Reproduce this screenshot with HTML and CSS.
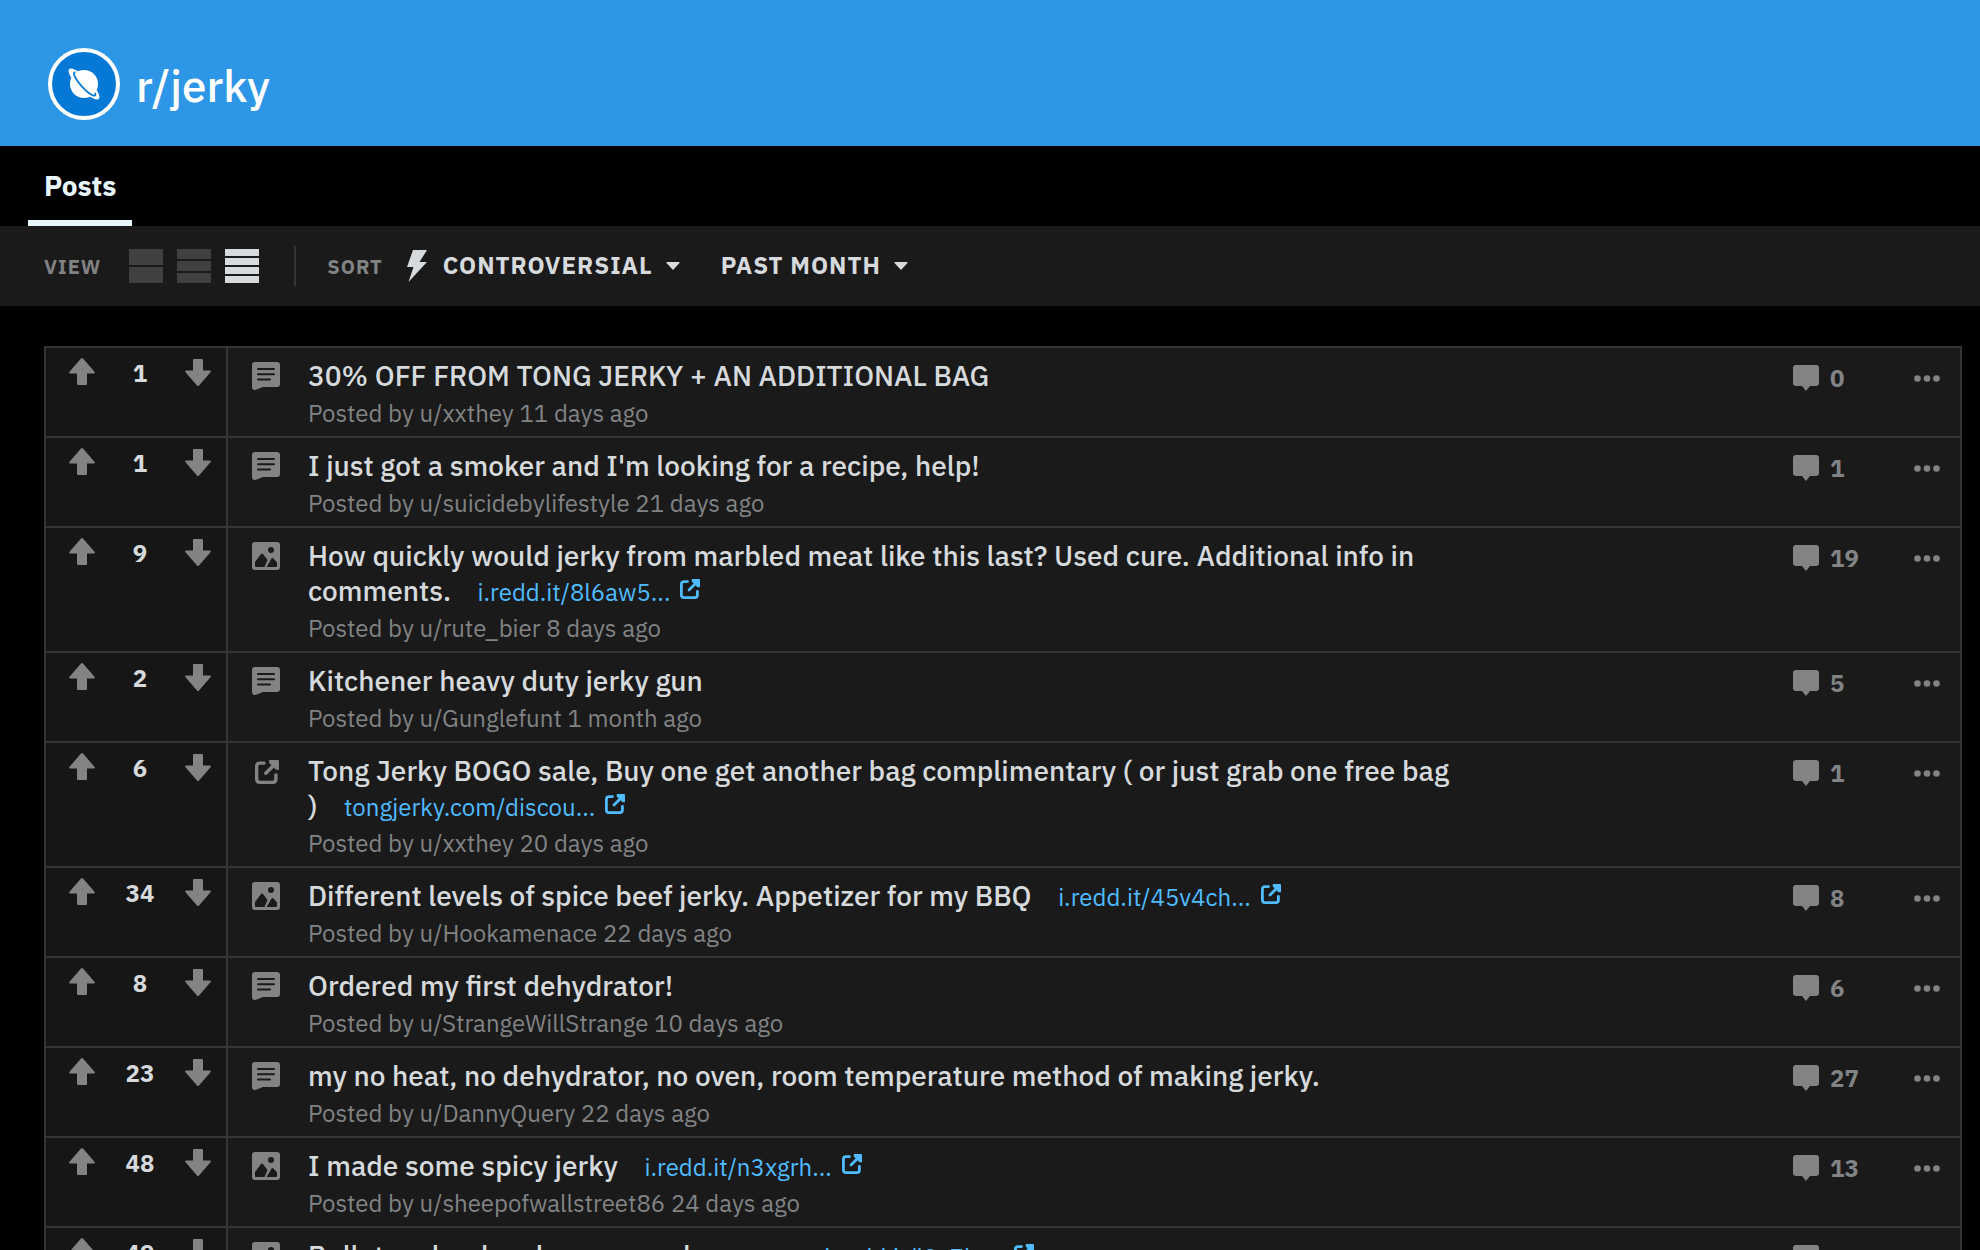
FILE: index.html
```
<!DOCTYPE html>
<html lang="en">
<head>
    <meta charset="UTF-8">
    <meta name="viewport" content="width=device-width, initial-scale=1.0">
    <title>r/jerky</title>
    <link rel="stylesheet" href="styles.css">
</head>
<body>
    <!-- Shared icons -->
    <svg class="sprite" aria-hidden="true">
        <symbol id="arrow" viewBox="0 0 26 27">
            <path d="M12 .6Q13-.4 14 .6L25.700 14Q26.200 15.500 25 15.500H18V26Q18 27 17 27H9Q8 27 8 26V15.500H1Q-.2 15.500.3 14Z"/>
        </symbol>
        <symbol id="text" viewBox="0 0 28 28">
            <path fill-rule="evenodd" d="M3 0H25Q28 0 28 3V22Q28 25 25 25H11L4 27.800Q0 28.500 0 25V3Q0 0 3 0ZM6 6Q5 6 5 7T6 8H22Q23 8 23 7T22 6ZM6 11.200Q5 11.200 5 12.200T6 13.200H22Q23 13.200 23 12.200T22 11.200ZM6 16.400Q5 16.400 5 17.400T6 18.400H18Q19 18.400 19 17.400T18 16.400Z"/>
        </symbol>
        <symbol id="image" viewBox="0 0 28 28">
            <path fill-rule="evenodd" d="M3 0H25Q28 0 28 3V25Q28 28 25 28H3Q0 28 0 25V3Q0 0 3 0ZM19 5A3 3 0 1 0 19 11A3 3 0 1 0 19 5ZM9 12Q10 11 11 12L15.500 18L12.500 25H4Q3 25 3 24V20ZM14.500 25L17 21L19.500 16.500Q20.500 15.500 21.500 16.500L25 20.500V24Q25 25 24 25Z"/>
        </symbol>
        <symbol id="external" viewBox="0 0 20 20">
            <path fill="none" stroke="currentColor" stroke-width="2.800" stroke-linecap="round" d="M7.500 2.600H4Q1.400 2.600 1.400 5.200V16Q1.400 18.600 4 18.600H14.800Q17.400 18.600 17.400 16V12.500M9 11L16.500 3.500"/>
            <path d="M11.800 0H19Q20 0 20 1V8.200H17.500L11.800 2.500Z"/>
        </symbol>
        <symbol id="comment" viewBox="0 0 26 26">
            <path d="M3 0H23Q26 0 26 3V18Q26 21 23 21H17L13 26L9 21H3Q0 21 0 18V3Q0 0 3 0Z"/>
        </symbol>
        <symbol id="dots" viewBox="0 0 26 26">
            <circle cx="3.500" cy="13.500" r="3.300"/><circle cx="13" cy="13.500" r="3.300"/><circle cx="22.500" cy="13.500" r="3.300"/>
        </symbol>
        <symbol id="caret" viewBox="0 0 14 8">
            <path d="M1 0H13Q14 .3 13.500 1L7.500 7.500Q7 8 6.500 7.500L.5 1Q0 .3 1 0Z"/>
        </symbol>
    </svg>

    <header class="header">
        <div class="avatar">
            <svg width="32" height="32" viewBox="0 0 32 32">
                <circle cx="16" cy="16" r="14" fill="#fff"/>
                <ellipse cx="16" cy="16" rx="21" ry="6" fill="#fff" transform="rotate(45 16 16)"/>
                <path d="M7.500 4.500C5 4.200 5 6.500 9.500 13S21 26 25 27.500C27.300 28.200 27.800 26.800 27.200 24.800" fill="none" stroke="#0679d6" stroke-width="1.800"/>
            </svg>
        </div>
        <h1>r/jerky</h1>
    </header>

    <nav class="tabs">
        <a href="#posts" class="tab">Posts</a>
    </nav>

    <div class="toolbar">
        <span class="toolbar-label">View</span>
        <div class="views">
            <button class="view" aria-label="Card view">
                <svg width="34" height="34"><path d="M0 0h34v16H0zM0 18h34v16H0z"/></svg>
            </button>
            <button class="view" aria-label="Classic view">
                <svg width="34" height="34"><path d="M0 0h34v10H0zM0 12h34v10H0zM0 24h34v10H0z"/></svg>
            </button>
            <button class="view active" aria-label="Compact view">
                <svg width="34" height="34"><path d="M0 0h34v7H0zM0 9h34v7H0zM0 18h34v7H0zM0 27h34v7H0z"/></svg>
            </button>
        </div>
        <div class="divider"></div>
        <label class="toolbar-label" for="sort">Sort</label>
        <div class="dropdown">
            <svg class="bolt" width="20" height="32" viewBox="0 0 20 32"><path d="M6 0H20L12.500 12H20L1.500 32L6.500 17H0Z"/></svg>
            <select id="sort"><option>CONTROVERSIAL</option></select>
            <svg width="14" height="8"><use href="#caret"/></svg>
        </div>
        <div class="dropdown">
            <select aria-label="Time range"><option>PAST MONTH</option></select>
            <svg width="14" height="8"><use href="#caret"/></svg>
        </div>
    </div>

    <main class="posts" id="posts">
        <article class="post">
            <div class="votes">
                <button aria-label="Upvote"><svg><use href="#arrow"/></svg></button>
                <span class="score">1</span>
                <button class="down" aria-label="Downvote"><svg><use href="#arrow"/></svg></button>
            </div>
            <svg class="type"><use href="#text"/></svg>
            <div class="info">
                <h2>30% OFF FROM TONG JERKY + AN ADDITIONAL BAG</h2>
                <p>Posted by u/xxthey 11 days ago</p>
            </div>
            <button class="comments"><svg><use href="#comment"/></svg>0</button>
            <button class="more" aria-label="More options"><svg><use href="#dots"/></svg></button>
        </article>

        <article class="post">
            <div class="votes">
                <button aria-label="Upvote"><svg><use href="#arrow"/></svg></button>
                <span class="score">1</span>
                <button class="down" aria-label="Downvote"><svg><use href="#arrow"/></svg></button>
            </div>
            <svg class="type"><use href="#text"/></svg>
            <div class="info">
                <h2>I just got a smoker and I'm looking for a recipe, help!</h2>
                <p>Posted by u/suicidebylifestyle 21 days ago</p>
            </div>
            <button class="comments"><svg><use href="#comment"/></svg>1</button>
            <button class="more" aria-label="More options"><svg><use href="#dots"/></svg></button>
        </article>

        <article class="post">
            <div class="votes">
                <button aria-label="Upvote"><svg><use href="#arrow"/></svg></button>
                <span class="score">9</span>
                <button class="down" aria-label="Downvote"><svg><use href="#arrow"/></svg></button>
            </div>
            <svg class="type"><use href="#image"/></svg>
            <div class="info">
                <h2>How quickly would jerky from marbled meat like this last? Used cure. Additional info in comments. <a href="#">i.redd.it/8l6aw5...<svg><use href="#external"/></svg></a></h2>
                <p>Posted by u/rute_bier 8 days ago</p>
            </div>
            <button class="comments"><svg><use href="#comment"/></svg>19</button>
            <button class="more" aria-label="More options"><svg><use href="#dots"/></svg></button>
        </article>

        <article class="post">
            <div class="votes">
                <button aria-label="Upvote"><svg><use href="#arrow"/></svg></button>
                <span class="score">2</span>
                <button class="down" aria-label="Downvote"><svg><use href="#arrow"/></svg></button>
            </div>
            <svg class="type"><use href="#text"/></svg>
            <div class="info">
                <h2>Kitchener heavy duty jerky gun</h2>
                <p>Posted by u/Gunglefunt 1 month ago</p>
            </div>
            <button class="comments"><svg><use href="#comment"/></svg>5</button>
            <button class="more" aria-label="More options"><svg><use href="#dots"/></svg></button>
        </article>

        <article class="post">
            <div class="votes">
                <button aria-label="Upvote"><svg><use href="#arrow"/></svg></button>
                <span class="score">6</span>
                <button class="down" aria-label="Downvote"><svg><use href="#arrow"/></svg></button>
            </div>
            <svg class="type"><use href="#external" x="3" y="3" width="24" height="24"/></svg>
            <div class="info">
                <h2>Tong Jerky BOGO sale, Buy one get another bag complimentary ( or just grab one free bag ) <a href="#">tongjerky.com/discou...<svg><use href="#external"/></svg></a></h2>
                <p>Posted by u/xxthey 20 days ago</p>
            </div>
            <button class="comments"><svg><use href="#comment"/></svg>1</button>
            <button class="more" aria-label="More options"><svg><use href="#dots"/></svg></button>
        </article>

        <article class="post">
            <div class="votes">
                <button aria-label="Upvote"><svg><use href="#arrow"/></svg></button>
                <span class="score">34</span>
                <button class="down" aria-label="Downvote"><svg><use href="#arrow"/></svg></button>
            </div>
            <svg class="type"><use href="#image"/></svg>
            <div class="info">
                <h2>Different levels of spice beef jerky. Appetizer for my BBQ <a href="#">i.redd.it/45v4ch...<svg><use href="#external"/></svg></a></h2>
                <p>Posted by u/Hookamenace 22 days ago</p>
            </div>
            <button class="comments"><svg><use href="#comment"/></svg>8</button>
            <button class="more" aria-label="More options"><svg><use href="#dots"/></svg></button>
        </article>

        <article class="post">
            <div class="votes">
                <button aria-label="Upvote"><svg><use href="#arrow"/></svg></button>
                <span class="score">8</span>
                <button class="down" aria-label="Downvote"><svg><use href="#arrow"/></svg></button>
            </div>
            <svg class="type"><use href="#text"/></svg>
            <div class="info">
                <h2>Ordered my first dehydrator!</h2>
                <p>Posted by u/StrangeWillStrange 10 days ago</p>
            </div>
            <button class="comments"><svg><use href="#comment"/></svg>6</button>
            <button class="more" aria-label="More options"><svg><use href="#dots"/></svg></button>
        </article>

        <article class="post">
            <div class="votes">
                <button aria-label="Upvote"><svg><use href="#arrow"/></svg></button>
                <span class="score">23</span>
                <button class="down" aria-label="Downvote"><svg><use href="#arrow"/></svg></button>
            </div>
            <svg class="type"><use href="#text"/></svg>
            <div class="info">
                <h2>my no heat, no dehydrator, no oven, room temperature method of making jerky.</h2>
                <p>Posted by u/DannyQuery 22 days ago</p>
            </div>
            <button class="comments"><svg><use href="#comment"/></svg>27</button>
            <button class="more" aria-label="More options"><svg><use href="#dots"/></svg></button>
        </article>

        <article class="post">
            <div class="votes">
                <button aria-label="Upvote"><svg><use href="#arrow"/></svg></button>
                <span class="score">48</span>
                <button class="down" aria-label="Downvote"><svg><use href="#arrow"/></svg></button>
            </div>
            <svg class="type"><use href="#image"/></svg>
            <div class="info">
                <h2>I made some spicy jerky <a href="#">i.redd.it/n3xgrh...<svg><use href="#external"/></svg></a></h2>
                <p>Posted by u/sheepofwallstreet86 24 days ago</p>
            </div>
            <button class="comments"><svg><use href="#comment"/></svg>13</button>
            <button class="more" aria-label="More options"><svg><use href="#dots"/></svg></button>
        </article>

        <article class="post">
            <div class="votes">
                <button aria-label="Upvote"><svg><use href="#arrow"/></svg></button>
                <span class="score">49</span>
                <button class="down" aria-label="Downvote"><svg><use href="#arrow"/></svg></button>
            </div>
            <svg class="type"><use href="#image"/></svg>
            <div class="info">
                <h2>Bullet and red and my own rub as ever <a href="#">i.redd.it/l9c7lu...<svg><use href="#external"/></svg></a></h2>
            </div>
            <button class="comments"><svg><use href="#comment"/></svg>8</button>
            <button class="more" aria-label="More options"><svg><use href="#dots"/></svg></button>
        </article>
    </main>
</body>
</html>
```
FILE: styles.css
```
* {
    margin: 0;
    padding: 0;
    box-sizing: border-box;
}

html,
body {
    height: 100%;
}

body {
    font-family: 'IBM Plex Sans', Roboto, sans-serif;
    font-size: 24px;
    background-color: #000;
    color: #d7dadc;
    overflow-x: hidden;
}

button,
select {
    font: inherit;
    color: inherit;
    background: none;
    border: none;
    cursor: pointer;
}

svg {
    display: block;
    fill: currentColor;
}

.sprite {
    width: 0;
    height: 0;
    position: absolute;
}

/* Header */
.header {
    display: flex;
    align-items: center;
    gap: 16px;
    padding: 48px 48px 26px;
    background-color: #2e96e6;
    color: #fff;
}

.header h1 {
    font-size: 44px;
    line-height: 56px;
    font-weight: 500;
    padding-top: 4px;
}

.avatar {
    display: flex;
    align-items: center;
    justify-content: center;
    width: 72px;
    height: 72px;
    border: 4px solid #fff;
    border-radius: 50%;
    background-color: #0679d6;
}

/* Tabs */
.tabs {
    display: flex;
    padding-left: 28px;
}

.tab {
    padding: 6px 16px 0;
    border-bottom: 6px solid #e8f5fd;
    color: #e8f5fd;
    font-size: 28px;
    line-height: 68px;
    font-weight: 700;
    text-decoration: none;
}

/* View and sort bar */
.toolbar {
    display: flex;
    align-items: center;
    height: 80px;
    padding-left: 44px;
    background-color: #1a1a1b;
}

.toolbar-label {
    color: #818384;
    font-size: 20px;
    font-weight: 700;
    letter-spacing: 1px;
    text-transform: uppercase;
}

.views {
    display: flex;
    gap: 14px;
    margin: 0 35px 0 28px;
}

.view {
    color: #3f4042;
}

.view.active {
    color: #d7dadc;
}

.divider {
    width: 2px;
    height: 40px;
    margin-right: 31px;
    background-color: #343536;
}

.dropdown {
    display: flex;
    align-items: center;
    gap: 12px;
    margin-left: 24px;
}

.dropdown + .dropdown {
    margin-left: 41px;
}

.bolt {
    margin-right: 4px;
}

.dropdown select {
    appearance: none;
    padding-bottom: 2px;
    font-weight: 700;
    letter-spacing: 1px;
}

/* Posts */
.posts {
    margin: 40px 18px 0 44px;
    border: 2px solid #343536;
    background-color: #1a1a1b;
}

.post {
    display: flex;
    align-items: flex-start;
    border-bottom: 2px solid #343536;
}

.post:last-child {
    border-bottom: none;
}

.votes {
    display: flex;
    align-items: flex-start;
    align-self: stretch;
    width: 182px;
    padding: 10px 15px 0 23px;
    border-right: 2px solid #343536;
    background-color: #161617;
    color: #818384;
}

.votes svg {
    width: 26px;
    height: 27px;
}

.down {
    padding-top: 1px;
}

.down svg {
    transform: rotate(180deg);
}

.score {
    flex: 1;
    color: #d7dadc;
    font-weight: 700;
    line-height: 30px;
    text-align: center;
}

.type {
    width: 28px;
    height: 28px;
    margin: 14px 28px 0 24px;
    color: #818384;
}

.info {
    flex: 1;
    padding: 10px 335px 9px 0;
}

.info h2 {
    font-size: 28px;
    line-height: 35px;
    font-weight: 500;
}

.info p {
    margin-top: 6px;
    color: #818384;
    line-height: 28px;
}

.info a {
    margin-left: 20px;
    color: #4fbcff;
    font-size: 24px;
    line-height: 24px;
    font-weight: 400;
    text-decoration: none;
    white-space: nowrap;
}

.info a svg {
    display: inline-block;
    width: 20px;
    height: 20px;
    margin-left: 10px;
    vertical-align: 2px;
}

.comments {
    display: flex;
    align-items: center;
    gap: 11px;
    width: 121px;
    margin-top: 17px;
    color: #818384;
    font-weight: 700;
    line-height: 26px;
}

.comments svg,
.more svg {
    width: 26px;
    height: 26px;
}

.more {
    margin: 17px 20px 0 0;
    color: #818384;
}
```
